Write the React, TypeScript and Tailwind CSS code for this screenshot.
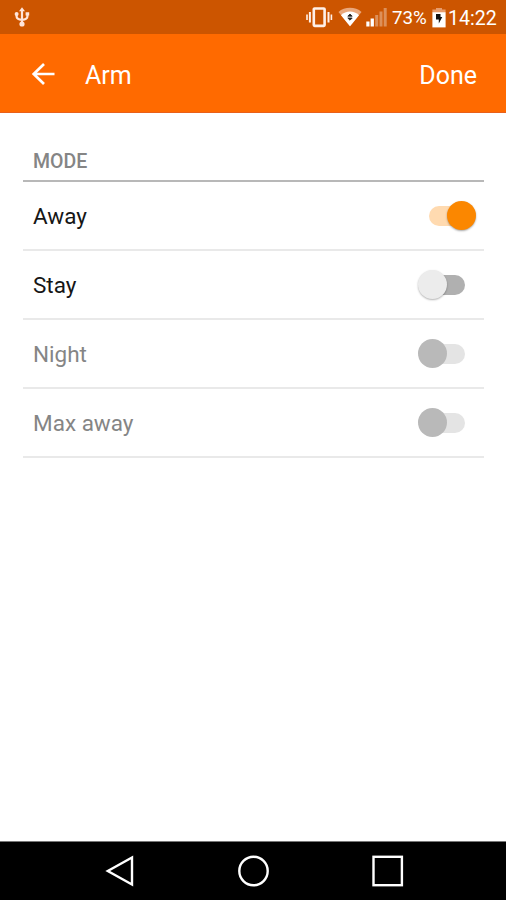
import React, { useState } from 'react';

const initialModes = [
  { id: 'away', label: 'Away', on: true, disabled: false },
  { id: 'stay', label: 'Stay', on: false, disabled: false },
  { id: 'night', label: 'Night', on: false, disabled: true },
  { id: 'max', label: 'Max away', on: false, disabled: true },
];

function StatusBar() {
  return (
    <div className="h-[34px] bg-[#cc5500] flex items-center text-white pl-[14px] pr-[9px]">
      <svg width="16" height="20" viewBox="0 0 16 20" fill="none" stroke="#ffe4da" strokeWidth="2.2">
        <path d="M8 3v14M2.6 7v2.4c0 2.2 2 3 5.4 3.4M13.4 7v2.4c0 2.2-2 3-5.4 3.4" />
        <path d="M8 .3l3 4H5zM11.6 5.2h3.6v3.4h-3.6z" fill="#ffe4da" stroke="none" />
        <circle cx="2.6" cy="7" r="2" fill="#ffe4da" stroke="none" />
        <circle cx="8" cy="17" r="2.6" fill="#ffe4da" stroke="none" />
      </svg>
      <div className="flex-1" />
      {/* Vibrate */}
      <svg className="shrink-0" width="28" height="22" viewBox="0 0 28 22" fill="none" stroke="#fff0e8">
        <rect x="8.8" y="2.5" width="10.8" height="17.4" rx=".8" strokeWidth="2.6" />
        <path d="M4.9 6v10.5M23.5 6v10.5" strokeWidth="2" />
        <path d="M2 8.5v5.5M26.4 8.5v5.5" strokeWidth="1.6" />
      </svg>
      {/* Wi-Fi */}
      <svg className="shrink-0 ml-[5px]" width="24" height="20" viewBox="0 0 24 20">
        <path d="M0.5 5C6.5 -0.6 17.5 -0.6 23.5 5L12 19.3z" fill="#e9a77c" />
        <path d="M3 8.2C8 3.4 16 3.4 21 8.2L12 19.3z" fill="#fff" />
        <path d="M9.8 9.2L12 7l2.2 2.2zM9.8 11h4.4L12 13.2z" fill="#222" stroke="#222" strokeWidth=".8" />
      </svg>
      {/* Signal */}
      <svg className="shrink-0 ml-[4px]" width="22" height="20" viewBox="0 0 22 20">
        <path d="M0.3 14.5h3.2v5H.3zM4.6 11.5h3.3v8H4.6z" fill="#fff" />
        <path d="M9.2 8h3v11.5h-3zM13.5 4.5h3v15h-3zM17.7 1h3v18.5h-3z" fill="#dd9059" />
      </svg>
      <span className="ml-[4px] w-[36px] text-[18.8px] leading-none whitespace-nowrap mt-[3px]">73%</span>
      {/* Battery */}
      <svg className="shrink-0 ml-[4px] mt-px" width="14" height="20" viewBox="0 0 14 20">
        <path d="M4 0h6v1.6h3.6V4.5H.4V1.6H4z" fill="#e79c6c" />
        <path d="M.4 4.2h13.2v15.2H.4z" fill="#fff" />
        <path d="M4 6h4.5v3h1.8L6.8 15.5V11.5H4z" fill="#111" />
      </svg>
      <span className="ml-[2px] w-[49px] text-[19.6px] leading-none whitespace-nowrap mt-[3px]">14:22</span>
    </div>
  );
}

function Toggle({ on, disabled, onClick }: any) {
  const track = on ? 'bg-[#ffdab0]' : disabled ? 'bg-[#e4e4e4]' : 'bg-[#b0b0b0]';
  const thumb = on
    ? 'right-0 bg-[#fb8700] shadow-[0_1px_2px_rgba(0,0,0,0.35)]'
    : disabled
      ? 'left-0 bg-[#b9b9b9]'
      : 'left-0 bg-[#ececec] shadow-[0_1px_2px_rgba(0,0,0,0.3)]';
  return (
    <button
      role="switch"
      aria-checked={on}
      disabled={disabled}
      onClick={onClick}
      className="relative w-[58px] h-[29px] flex items-center justify-center"
    >
      <span className={`w-[36px] h-5 rounded-full ${track}`} />
      <span className={`absolute top-0 w-[29px] h-[29px] rounded-full ${thumb}`} />
    </button>
  );
}

export default function App() {
  const [modes, setModes] = useState(initialModes);

  const toggle = (id: string) => {
    setModes(modes.map((m) => (m.id === id ? { ...m, on: !m.on } : m)));
  };

  return (
    <div className="w-full h-screen flex flex-col bg-white overflow-hidden font-['Roboto',sans-serif]">
      <StatusBar />

      <header className="h-[79px] bg-[#ff6a00] border-b border-[#e9601a] flex items-center text-white pl-[31px] pr-[29px]">
        <svg className="mt-px" width="25" height="24" viewBox="0 0 25 24" fill="none" stroke="#fff" strokeWidth="2.7">
          <path d="M23.5 12H2.5M13 2L2.7 12L13 22" />
        </svg>
        <h1 className="ml-[29px] text-[25px] leading-none mt-[4px]">Arm</h1>
        <button className="ml-auto text-[25px] leading-none mt-[4px]">Done</button>
      </header>

      <main className="flex-1 pl-[23px] pr-[22px]">
        <div className="h-[69px] pt-[39px] pl-[10px] border-b-2 border-[#b8b8b8]">
          <h2 className="text-[19.5px] leading-[20px] font-medium text-[#858585]">MODE</h2>
        </div>
        {modes.map((m) => (
          <div key={m.id} className="h-[69px] border-b-2 border-[#e9e9e9] flex items-center justify-between pl-[10px] pr-[8px]">
            <span className={`text-[22.5px] leading-none mt-[2px] ${m.disabled ? 'text-[#858585]' : 'text-[#161616]'}`}>{m.label}</span>
            <Toggle on={m.on} disabled={m.disabled} onClick={() => toggle(m.id)} />
          </div>
        ))}
      </main>

      {/* Android navigation buttons */}
      <nav className="h-[59px] bg-black border-t border-[#777] flex items-center pl-[105px]">
        <svg width="30" height="34" viewBox="0 0 30 34" fill="none" stroke="#fff" strokeWidth="2.4">
          <path d="M27 3.5v27L2.8 17z" />
        </svg>
        <svg className="ml-[102px]" width="34" height="34" viewBox="0 0 34 34" fill="none" stroke="#fff" strokeWidth="2.4">
          <circle cx="16.5" cy="17" r="14.2" />
        </svg>
        <svg className="ml-[100px]" width="34" height="34" viewBox="0 0 34 34" fill="none" stroke="#fff" strokeWidth="2.4">
          <rect x="2.5" y="2.8" width="28.4" height="28.4" />
        </svg>
      </nav>
    </div>
  );
}
